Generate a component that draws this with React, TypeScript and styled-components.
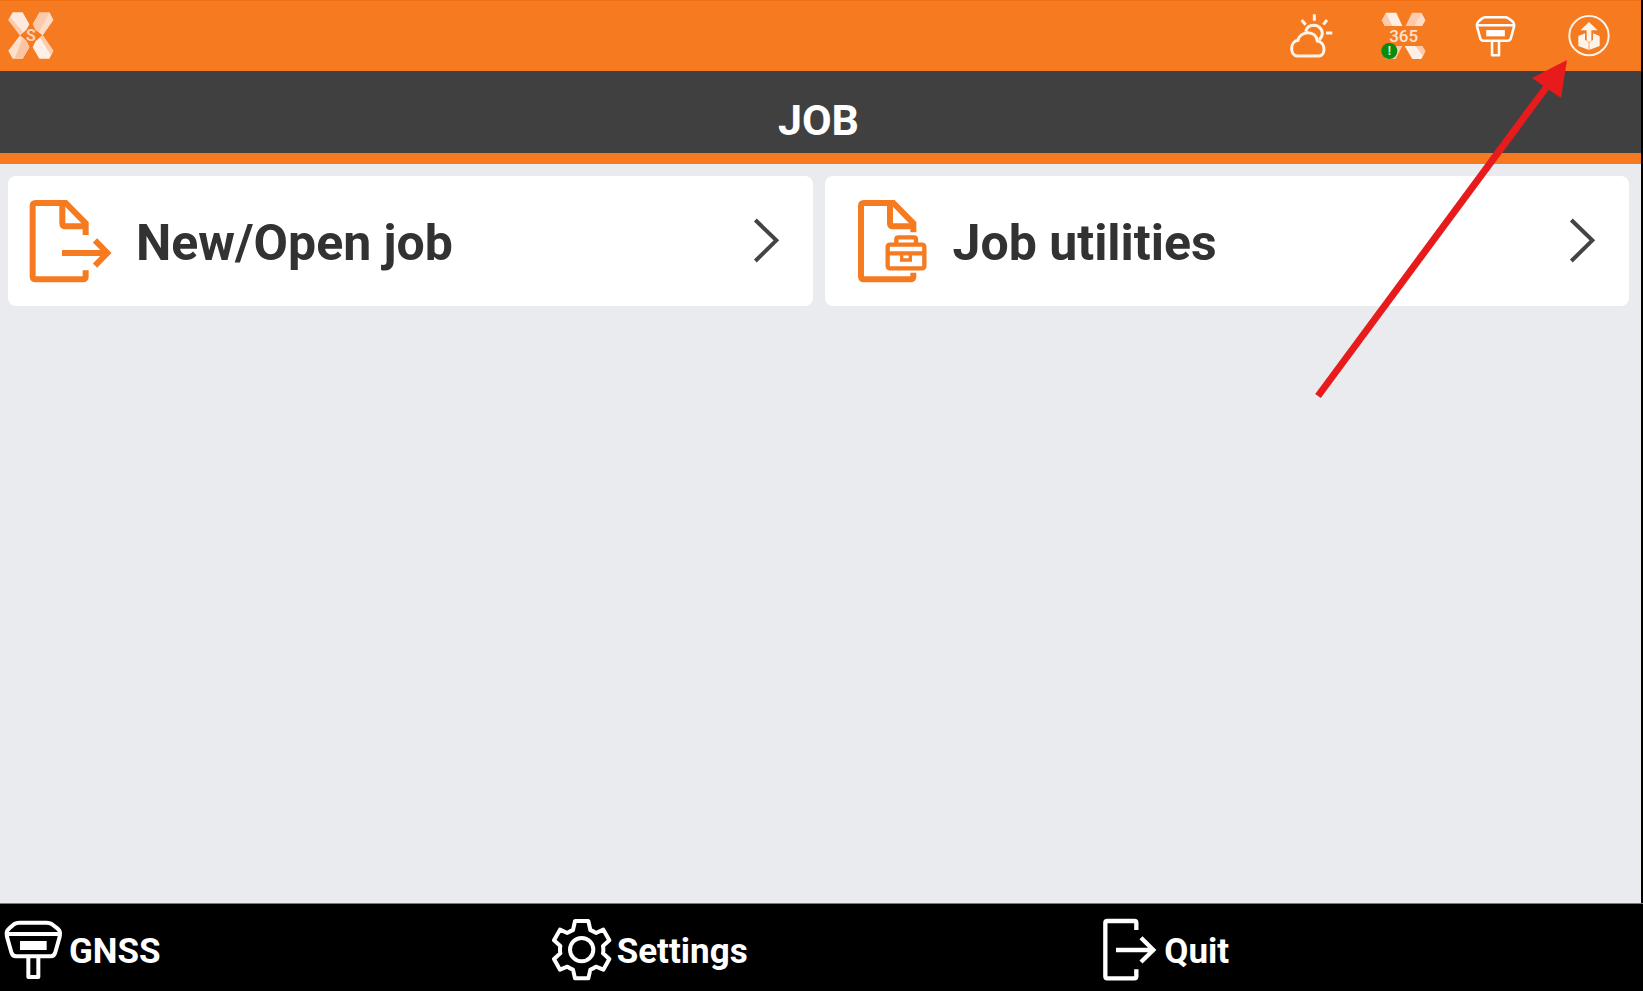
import React from "react";
import styled, { createGlobalStyle } from "styled-components";

const orange = "#f57a20";

const GlobalStyle = createGlobalStyle`
  *, *::before, *::after { box-sizing: border-box; }
  body {
    margin: 0;
    background: #000;
    font-family: Roboto, "Liberation Sans", sans-serif;
  }
`;

const Screen = styled.div`
  position: relative;
  display: flex;
  flex-direction: column;
  min-height: 100vh;
  padding-right: 2px;
  background: #000;
`;

const StatusBar = styled.header`
  display: flex;
  justify-content: space-between;
  align-items: center;
  height: 71px;
  padding: 0 30px 0 8px;
  border-top: 1px solid #f07012;
  background: ${orange};
`;

const StatusIcons = styled.nav`
  display: flex;
  gap: 49px;
`;

const IconButton = styled.button`
  display: flex;
  align-items: center;
  justify-content: center;
  width: 44px;
  height: 48px;
  padding: 0;
  border: 0;
  background: none;
  font: inherit;
  cursor: pointer;

  svg {
    flex: none;
    overflow: visible;
  }
`;

const TitleBar = styled.div`
  display: flex;
  align-items: center;
  justify-content: center;
  height: 93px;
  padding: 16px 4px 0 0;
  border-bottom: 11px solid ${orange};
  background: #404040;
`;

const Title = styled.h1`
  margin: 0;
  color: #fff;
  font-size: 43px;
  line-height: 52px;
  font-weight: 700;
`;

const Menu = styled.main`
  flex: 1;
  display: grid;
  grid-template-columns: 1fr 1fr;
  align-content: start;
  gap: 12px;
  padding: 12px 12px 12px 8px;
  background: #e9ebee;
`;

const Card = styled.button`
  display: flex;
  align-items: center;
  height: 130px;
  padding: 0 32px 0 20px;
  border: 0;
  border-radius: 8px;
  background: #fff;
  color: #323232;
  font: inherit;
  text-align: left;
  cursor: pointer;

  svg {
    flex: none;
  }
`;

const CardLabel = styled.span`
  flex: 1;
  padding: 4px 0 0 24px;
  font-size: 50px;
  line-height: 58px;
  font-weight: 700;
`;

const Footer = styled.footer`
  display: grid;
  grid-template-columns: repeat(3, 1fr);
  height: 88px;
  margin-right: -2px;
  padding-top: 4px;
  border-top: 1px solid #77797b;
  background: #000;
`;

const FooterButton = styled.button`
  display: flex;
  align-items: center;
  gap: 5px;
  padding: 0 0 0 4px;
  border: 0;
  background: none;
  color: #fff;
  font: inherit;
  text-align: left;
  cursor: pointer;
`;

const FooterLabel = styled.span`
  padding-top: 4px;
  font-size: 35px;
  line-height: 41px;
  font-weight: 700;
`;

/* Callout arrow lying over the page, pointing at the update button. */
const Callout = styled.svg`
  position: absolute;
  top: 58px;
  right: 72px;
  pointer-events: none;
`;

const LogoIcon = () => (
  <svg width="46" height="48" viewBox="24 36 138 144">
    <path d="M25 60 38 37H68L88 73 79 90 60 106Z" fill="#fde9dd" />
    <path d="M25 60 30 51 70 97 60 106Z" fill="#fbcbac" />
    <path d="M98 72 118 37H148L160 60 128 106 106 90Z" fill="#fbcaaa" />
    <path d="M148 37 160 60 128 106 117 97Z" fill="#fddcc8" />
    <path d="M60 106 79 122 88 142 68 176H38L25 152Z" fill="#fddfcd" />
    <path d="M68 114 79 122 88 142 68 176H44Z" fill="#fbc5a2" />
    <path d="M128 106 160 152 148 176H118L98 142 107 123Z" fill="#fef0e7" />
    <path d="M128 106 160 152 153 166 119 112Z" fill="#fbcbac" />
    <circle cx="93" cy="106" r="21" fill={orange} />
    <text x="93" y="124" textAnchor="middle" fontSize="48" fontWeight="700" fill="#fcd0b4">S</text>
  </svg>
);

const WeatherIcon = () => (
  <svg width="44" height="48" viewBox="54 35 132 144" fill="none" stroke="#fff4ea" strokeWidth="9">
    <path d="M82 167H146C157 167 162 156 162 147C162 134 154 124 142 122C140 106 129 97 114 97C99 97 86 107 84 120C72 122 65 132 65 144C65 157 72 167 82 167Z" />
    <path d="M107 94C110 81 121 75 132 75C147 75 157 87 157 99C157 108 153 114 147 119" />
    <path d="M133 42V61M95 59 107 73M171 59 160 73M168 98H187" />
  </svg>
);

const X365Icon = () => (
  <svg width="44" height="48" viewBox="334 35 132 144">
    <path d="M337 60 349 37H380L398 77H345Z" fill="#fef0e7" />
    <path d="M337 60 349 37 368 77H345Z" fill="#fbcbac" />
    <path d="M408 77 427 37H455L467 60 457 77Z" fill="#fbcbac" />
    <path d="M455 37 467 60 457 77H434Z" fill="#fddcc8" />
    <path d="M345 137H398L378 176H348L337 152Z" fill="#fbcbac" />
    <path d="M405 137H457L467 152 455 176H428Z" fill="#fef0e7" />
    <path d="M437 137H457L467 152 460 167Z" fill="#fbcbac" />
    <text x="402" y="124" textAnchor="middle" fontSize="51" fontWeight="500" fill="#fee3d2">365</text>
    <circle cx="359" cy="152" r="24" fill="#0b8a0b" />
    <text x="359" y="165" textAnchor="middle" fontSize="36" fontWeight="700" fill="#d8f5d0">!</text>
  </svg>
);

const ReceiverIcon = ({ width, height, stroke }: { width: number; height: number; stroke: number }) => (
  <svg width={width} height={height} viewBox="0 0 180 189" fill="none" stroke="#fff" strokeWidth={stroke} strokeLinejoin="round">
    <path d="M46 14H128Q137 14 143 18L160 31Q168 37 168 46Q168 54 166 60L154 103Q151 115 140 115H36Q25 115 22 103L10 60Q8 54 8 46Q8 37 16 31L31 18Q37 14 46 14Z" />
    <path d="M8 48H168" />
    <rect x="48" y="69" width="80" height="27" fill="#fff" stroke="none" />
    <path d="M73 116V177H103V116" />
  </svg>
);

const UpdateIcon = () => (
  <svg width="44" height="48" viewBox="351 35 132 144" fill="#fff4ea">
    <circle cx="417" cy="106" r="59" fill="none" stroke="#fff4ea" strokeWidth="6" />
    <path d="M417 65 443 90H424V122L417 125 410 122V90H391Z" />
    <path d="M385 107 405 99V118L417 127 429 118V99L449 107V137L417 149 385 137Z" />
    <path d="M417 127V149" stroke={orange} strokeWidth="2" />
  </svg>
);

const OpenJobIcon = () => (
  <svg width="84" height="84" viewBox="84 176 252 252" fill="none" stroke={orange} strokeWidth="18">
    <path d="M257 284V249L197 188H107Q98 188 98 197V408Q98 417 107 417H248Q257 417 257 408V390" />
    <path d="M187 188V249Q187 258 196 258H257" />
    <path d="M186 338H318" />
    <path d="M285 300 322 338 285 376" />
  </svg>
);

const JobUtilitiesIcon = () => (
  <svg width="84" height="84" viewBox="345 176 252 252" fill="none" stroke={orange} strokeWidth="18">
    <path d="M550 276V249L490 188H402Q393 188 393 197V408Q393 417 402 417H541Q550 417 550 408V397" />
    <path d="M480 188V249Q480 258 489 258H550" />
    <g strokeWidth="13">
      <rect x="473" y="313" width="110" height="71" rx="6" />
      <path d="M499 313V297Q499 291 505 291H552Q558 291 558 297V313" />
      <path d="M473 339H583" />
      <path d="M515 339V359H541V339" strokeWidth="10" />
    </g>
  </svg>
);

const Chevron = () => (
  <svg width="28" height="48" viewBox="69 230 84 144" fill="none" stroke="#444" strokeWidth="12">
    <path d="M76 239 139 300 76 362" />
  </svg>
);

const GearIcon = () => (
  <svg width="60" height="63" viewBox="66 84 180 189" fill="none" stroke="#fff" strokeWidth="12" strokeLinejoin="round">
    <path d="M135 93H175L181 120Q190 123 198 129L220 119 238 151 219 168Q221 179 219 190L238 207 220 239 198 230Q190 236 181 239L175 265H135L129 239Q120 236 112 230L90 239 72 207 91 190Q89 179 91 168L72 151 90 119 112 129Q120 123 129 120Z" />
    <circle cx="155" cy="179" r="35" />
  </svg>
);

const QuitIcon = () => (
  <svg width="60" height="63" viewBox="58 84 180 189" fill="none" stroke="#fff" strokeWidth="13">
    <path d="M170 120V99Q170 93 164 93H83Q77 93 77 99V259Q77 265 83 265H164Q170 265 170 259V238" />
    <path d="M109 180H219M184 143 221 180 184 216" />
  </svg>
);

export default function App() {
  return (
    <>
      <GlobalStyle />
      <Screen>
        <StatusBar>
          <LogoIcon />
          <StatusIcons aria-label="Status">
            <IconButton aria-label="Weather"><WeatherIcon /></IconButton>
            <IconButton aria-label="365 connection"><X365Icon /></IconButton>
            <IconButton aria-label="Receiver"><ReceiverIcon width={42} height={44} stroke={11} /></IconButton>
            <IconButton aria-label="Update"><UpdateIcon /></IconButton>
          </StatusIcons>
        </StatusBar>
        <TitleBar>
          <Title>JOB</Title>
        </TitleBar>
        <Menu>
          <Card>
            <OpenJobIcon />
            <CardLabel>New/Open job</CardLabel>
            <Chevron />
          </Card>
          <Card>
            <JobUtilitiesIcon />
            <CardLabel>Job utilities</CardLabel>
            <Chevron />
          </Card>
        </Menu>
        <Footer>
          <FooterButton>
            <ReceiverIcon width={60} height={63} stroke={12} />
            <FooterLabel>GNSS</FooterLabel>
          </FooterButton>
          <FooterButton>
            <GearIcon />
            <FooterLabel>Settings</FooterLabel>
          </FooterButton>
          <FooterButton>
            <QuitIcon />
            <FooterLabel>Quit</FooterLabel>
          </FooterButton>
        </Footer>
        <Callout width="257" height="342" viewBox="0 0 257 342" aria-hidden="true">
          <path d="M4 338 234 27" stroke="#e81b1c" strokeWidth="7" />
          <path d="M253 2 218 20 247 40Z" fill="#e81b1c" />
        </Callout>
      </Screen>
    </>
  );
}
